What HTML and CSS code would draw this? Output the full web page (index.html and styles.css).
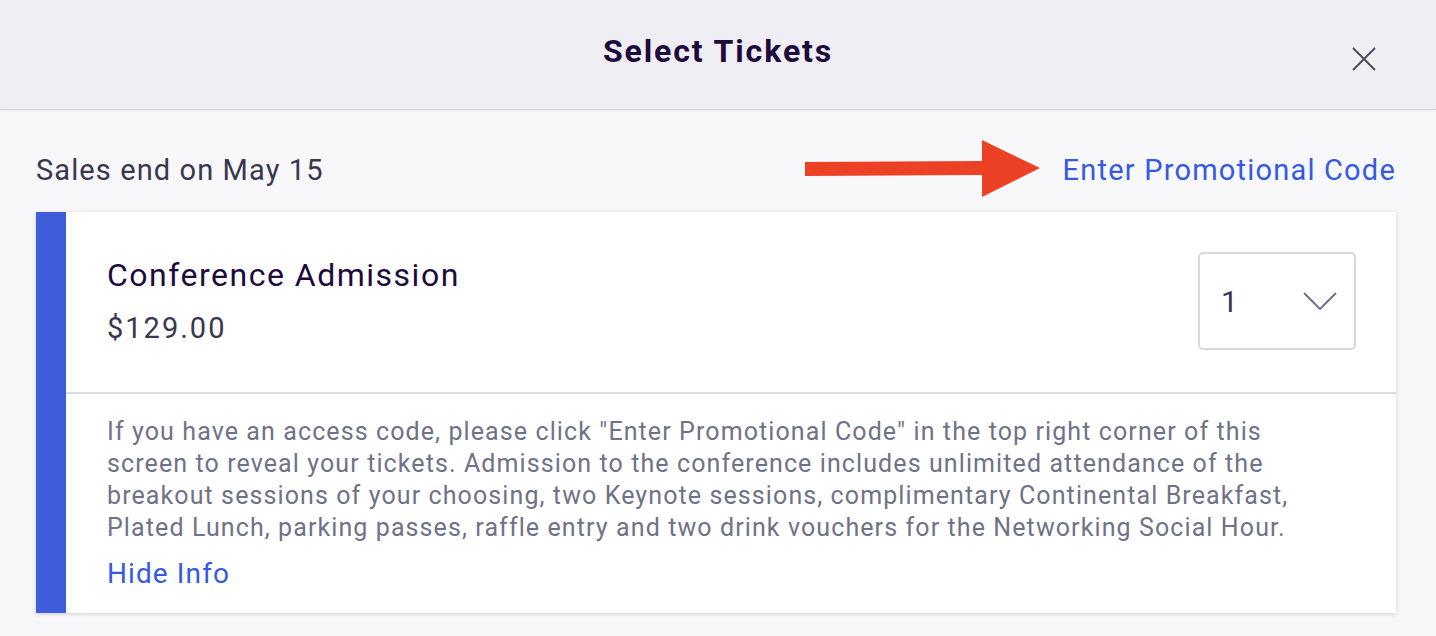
FILE: index.html
```html
<!DOCTYPE html>
<html>
<head>
<meta charset="utf-8">
<link rel="stylesheet" href="styles.css">
</head>
<body>
<div class="modal">
  <header class="header">
    <h1 class="title">Select Tickets</h1>
    <button class="close" aria-label="Close">
      <svg width="24" height="24" viewBox="0 0 24 24"><path d="M1 1L23 23M23 1L1 23" stroke="#4b4a5c" stroke-width="1.8" fill="none"/></svg>
    </button>
  </header>
  <main class="body">
    <div class="topline">
      <span class="sales">Sales end on May 15</span>
      <div class="promo-wrap">
        <svg class="arrow" width="236" height="58" viewBox="0 0 236 58"><path d="M0 22 L177 21 L177 0 L235 28 L177 57 L177 35 L0 36 Z" fill="#eb4125"/></svg>
        <a class="promo" href="#">Enter Promotional Code</a>
      </div>
    </div>
    <section class="card">
      <div class="bar"></div>
      <div class="content">
        <div class="ticket">
          <div class="info">
            <div class="name">Conference Admission</div>
            <div class="price">$129.00</div>
          </div>
          <div class="select">
            <span class="qty">1</span>
            <svg width="34" height="18" viewBox="0 0 34 18"><path d="M1 1L17 17L33 1" stroke="#6f7287" stroke-width="2" fill="none"/></svg>
          </div>
        </div>
        <div class="details">
          <p class="desc">If you have an access code, please click "Enter Promotional Code" in the top right corner of this screen to reveal your tickets. Admission to the conference includes unlimited attendance of the breakout sessions of your choosing, two Keynote sessions, complimentary Continental Breakfast, Plated Lunch, parking passes, raffle entry and two drink vouchers for the Networking Social Hour.</p>
          <a class="hide" href="#">Hide Info</a>
        </div>
      </div>
    </section>
  </main>
</div>
</body>
</html>
```
FILE: styles.css
```css
html, body {
  margin: 0;
  padding: 0;
}
body {
  width: 1436px;
  height: 636px;
  overflow: hidden;
  background: #f8f8fa;
  font-family: Roboto, "Liberation Sans", sans-serif;
}
.modal {
  display: flex;
  flex-direction: column;
  height: 636px;
}
.header {
  height: 109px;
  flex: none;
  background: #efeef3;
  border-bottom: 1px solid #d9d8df;
  box-shadow: 0 1px 3px rgba(0,0,0,0.06);
  display: flex;
  align-items: center;
  justify-content: center;
  position: relative;
}
.title {
  margin: 0;
  font-size: 32px;
  font-weight: 700;
  color: #1e0a3c;
  margin-top: -8px;
  letter-spacing: 1.9px;
}
.close {
  position: absolute;
  right: 60px;
  top: 47px;
  width: 24px;
  height: 24px;
  padding: 0;
  border: 0;
  background: none;
  display: block;
}
.close svg { display: block; }
.body {
  padding: 0 40px 0 36px;
}
.topline {
  height: 102px;
  display: flex;
  align-items: center;
  justify-content: space-between;
}
.sales {
  font-size: 29px;
  color: #39364f;
  margin-top: 18px;
  letter-spacing: 1.1px;
}
.promo-wrap {
  display: flex;
  align-items: center;
  gap: 22px;
  margin-top: 16px;
}
.arrow { display: block; }
.promo {
  font-size: 29px;
  color: #3659e3;
  text-decoration: none;
  margin-top: 2px;
  letter-spacing: 1.2px;
}
.card {
  display: flex;
  background: #fff;
  box-shadow: 0 1px 4px rgba(30,10,60,0.18);
  height: 401px;
}
.bar {
  width: 30px;
  background: #3d5ddb;
  flex: none;
}
.content {
  flex: 1;
  display: flex;
  flex-direction: column;
}
.ticket {
  flex: none;
  height: 182px;
  border-bottom: 2px solid #dbdae3;
  display: flex;
  justify-content: space-between;
  align-items: flex-start;
  padding: 0 40px 0 41px;
  box-sizing: border-box;
}
.info { padding-top: 43px; }
.name {
  font-size: 32px;
  color: #1e0a3c;
  line-height: 40px;
  letter-spacing: 1.5px;
}
.price {
  font-size: 29px;
  color: #39364f;
  margin-top: 15px;
  line-height: 36px;
  letter-spacing: 2px;
}
.select {
  margin-top: 40px;
  width: 158px;
  height: 98px;
  box-sizing: border-box;
  border: 2px solid #d9d8df;
  border-radius: 5px;
  display: flex;
  align-items: center;
  justify-content: space-between;
  padding: 0 17px 0 21px;
}
.qty {
  font-size: 30px;
  color: #39364f;
}
.select svg { display: block; }
.details {
  padding: 22px 80px 0 41px;
}
.desc {
  margin: 0;
  font-size: 25px;
  line-height: 32px;
  color: #6f7287;
  letter-spacing: 1.1px;
}
.hide {
  display: inline-block;
  margin-top: 13px;
  font-size: 28px;
  color: #3659e3;
  text-decoration: none;
  letter-spacing: 1.1px;
}
```
